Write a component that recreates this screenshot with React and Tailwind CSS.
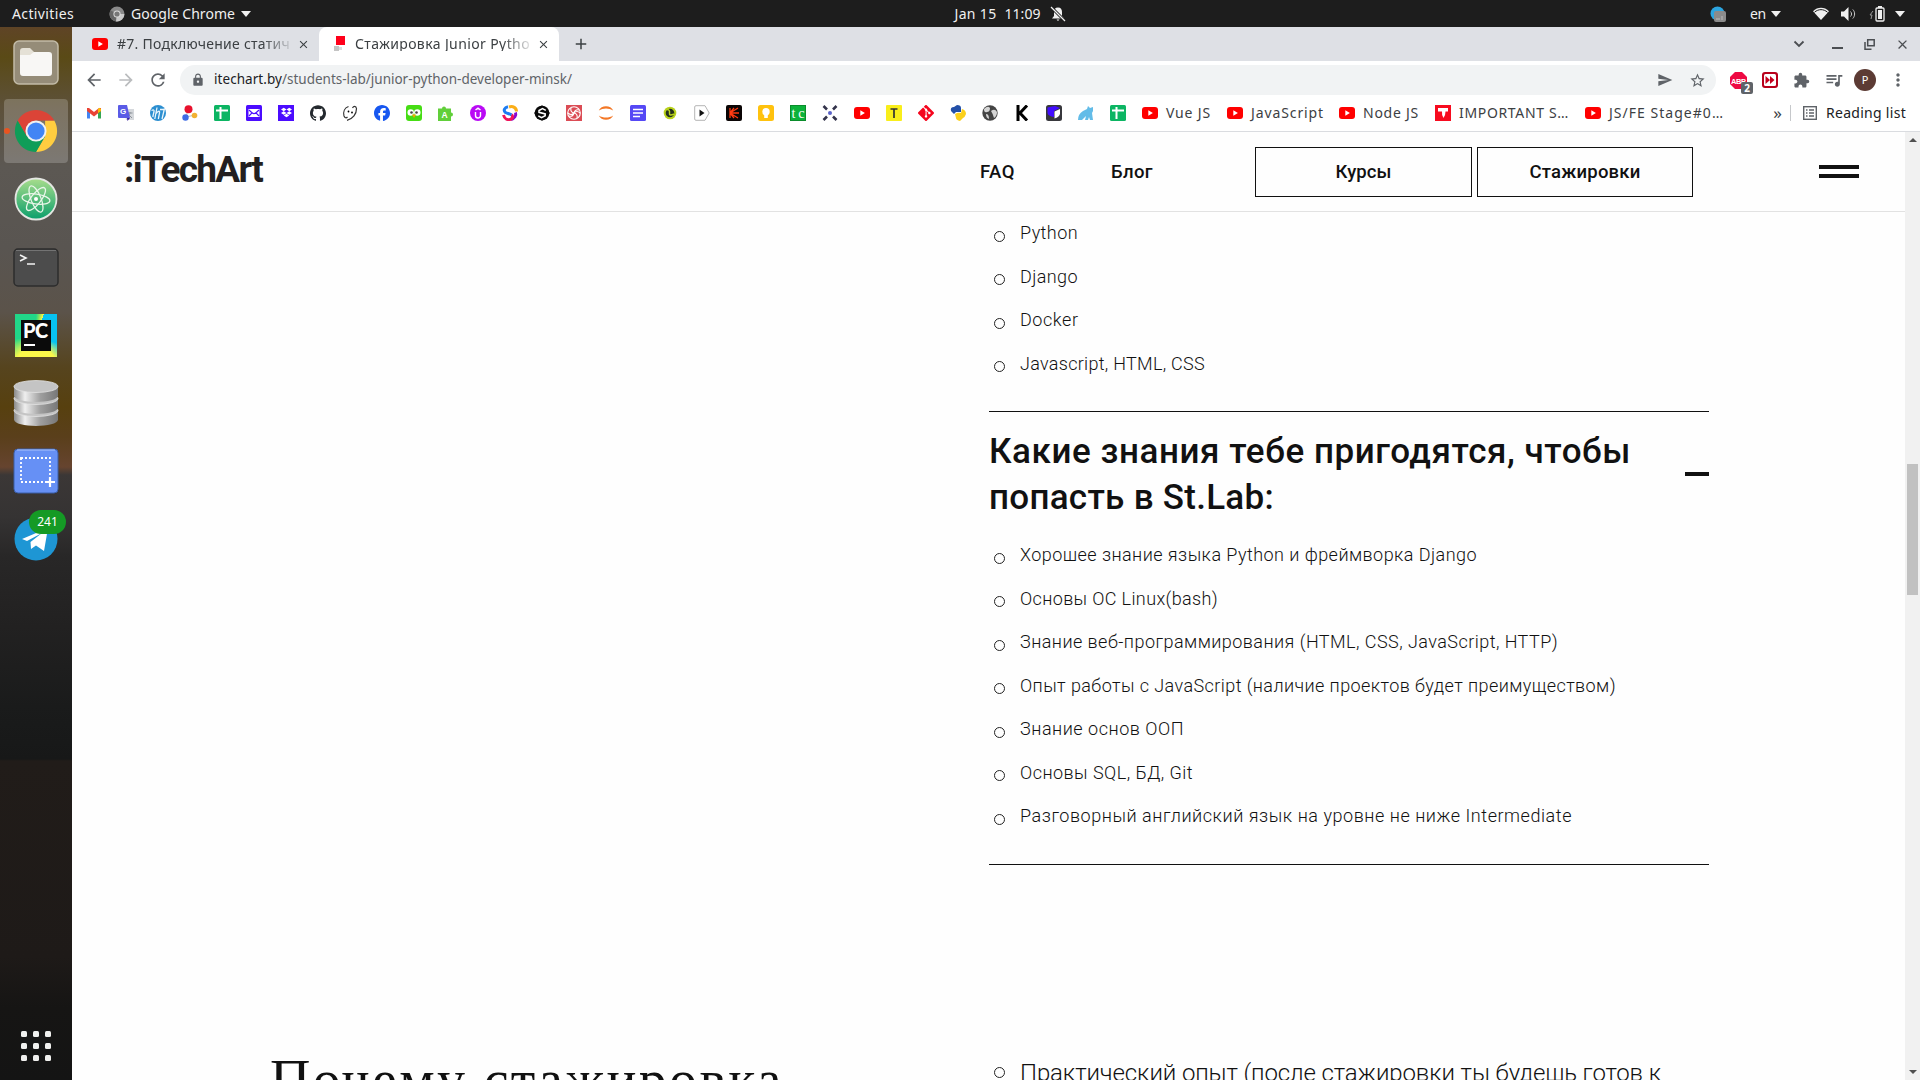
import React, { useLayoutEffect, useRef, useState } from "react";
import { SiDropbox, SiGithub, SiGit, SiFacebook } from "react-icons/si";
import {
  MdArrowBack, MdArrowForward, MdRefresh, MdLock, MdSend, MdStarBorder, MdExtension,
  MdMoreVert, MdClose, MdAdd, MdQueueMusic,
} from "react-icons/md";

const UI = "font-['Noto_Sans','Open_Sans',sans-serif]";

/* One line of text tracked so that it fills exactly w pixels. */
function Line({ w, className = "", children }) {
  const ref = useRef(null);
  const [gap, setGap] = useState(0);
  useLayoutEffect(() => {
    const natural = ref.current.getBoundingClientRect().width;
    setGap((w - natural) / String(children).length);
  }, [w, children]);
  return (
    <span className={"block shrink-0 whitespace-nowrap " + className} style={{ width: w }}>
      <span ref={ref} style={{ letterSpacing: gap }}>{children}</span>
    </span>
  );
}

function YouTube() {
  return (
    <svg viewBox="0 0 16 16" className="size-4 shrink-0">
      <rect y="2" width="16" height="12" rx="3" fill="#f00" />
      <path d="M6.3 5.3v5.4L10.9 8z" fill="#fff" />
    </svg>
  );
}

function TopBar() {
  return (
    <div className={`grid h-[27px] grid-cols-[1fr_auto_1fr] items-center bg-[#1d1d1d] text-[14px] leading-none text-[#f0f0f0] ${UI}`}>
      <div className="flex items-center pl-3">
        <Line w={62}>Activities</Line>
        <svg viewBox="0 0 16 16" className="ml-[35px] size-[16px]">
          <circle cx="8" cy="8" r="7.5" fill="#8a8a8a" />
          <path d="M8 8 1.5 4.2A7.5 7.5 0 0 0 7 15.4z" fill="#666" />
          <path d="M8 8h7.4A7.5 7.5 0 0 1 7 15.4z" fill="#c9c9c9" />
          <circle cx="8" cy="8" r="3.6" fill="#ddd" />
          <circle cx="8" cy="8" r="2.6" fill="#777" />
        </svg>
        <Line w={104} className="ml-[6px]">Google Chrome</Line>
        <svg viewBox="0 0 10 6" className="ml-[6px] h-[6px] w-[10px]"><path d="M0 0h10L5 6z" fill="#f0f0f0" /></svg>
      </div>
      <div className="flex items-center pl-[100px]">
        <Line w={42}>Jan 15</Line>
        <Line w={36} className="ml-[8px]">11:09</Line>
        <svg viewBox="0 0 16 16" className="ml-[9px] size-[16px]">
          <path d="M8 1.5c2.8 0 4 2 4 4.500v4L14 12.500H2L4 10V6c0-2.500 1.200-4.500 4-4.500zM6.500 13.500h3L8 15z" fill="#f0f0f0" />
          <path d="M1 1 15 15" stroke="#1d1d1d" strokeWidth="3" />
          <path d="M1 1 15 15" stroke="#f0f0f0" strokeWidth="1.300" />
        </svg>
      </div>
      <div className="flex items-center justify-end pr-[15px]">
        <svg viewBox="0 0 16 16" className="size-[16px]">
          <circle cx="7.500" cy="7.500" r="7" fill="#2ca5e0" />
          <rect x="4" y="5" width="12" height="11" rx="2" fill="#8b8b8b" />
          <path d="M6 13h4M12 10v4" stroke="#bbb" />
        </svg>
        <Line w={16} className="ml-[24px]">en</Line>
        <svg viewBox="0 0 10 6" className="ml-[5px] h-[6px] w-[10px]"><path d="M0 0h10L5 6z" fill="#f0f0f0" /></svg>
        <svg viewBox="0 0 16 13" className="ml-[32px] h-[13px] w-[16px]">
          <path d="M0 4.200C4.500-.4 11.500-.4 16 4.200L8 13z" fill="#f0f0f0" />
          <path d="M1.500 5.200C5.500 1.800 10.500 1.800 14.500 5.200" stroke="#1d1d1d" fill="none" />
        </svg>
        <svg viewBox="0 0 16 14" className="ml-[12px] h-[14px] w-[16px]">
          <path d="M0 4.500h3L7.500 0v14L3 9.500H0z" fill="#f0f0f0" />
          <path d="M9.500 4.500c1.400 1.400 1.400 3.600 0 5M11.800 2.500c2.400 2.400 2.400 6.600 0 9" stroke="#ccc" fill="none" />
        </svg>
        <svg viewBox="0 0 16 16" className="ml-[12px] size-[16px]">
          <path d="M4 5 1 9h2l-1 4" stroke="#999" fill="none" />
          <rect x="7" y="2" width="8" height="13" rx="1" fill="none" stroke="#f0f0f0" strokeWidth="1.300" />
          <path d="M9 0h4v2H9zM9 4h4v9H9z" fill="#f0f0f0" />
        </svg>
        <svg viewBox="0 0 10 6" className="ml-[10px] h-[6px] w-[10px]"><path d="M0 0h10L5 6z" fill="#f0f0f0" /></svg>
      </div>
    </div>
  );
}

function Dock() {
  return (
    <aside className="flex w-[72px] shrink-0 flex-col items-center bg-[linear-gradient(180deg,#5f4426_0px,#5a4a16_30px,#5d513a_80px,#5c5853_140px,#595551_220px,#5b534a_285px,#56441e_340px,#57400f_380px,#5a3f1b_410px,#66442f_440px,#3b3736_448px,#353333_490px,#282727_530px,#222121_600px,#1a1b1b_680px,#171818_732px,#211c19_734px,#1e1a18_930px,#161514_980px,#141414_1053px)] pt-[13px]">
      <svg viewBox="0 0 46 46" className="size-[46px]">
        <rect x="1" y="1" width="44" height="43" rx="5" fill="#958c78" stroke="#c2bba7" strokeWidth="1.500" />
        <path d="M7 11q0-3 3-3h7l4 4h15v6H7z" fill="#e5e1d6" />
        <path d="M7 15h10l4-3h15q3 0 3 3v18q0 3-3 3H10q-3 0-3-3z" fill="#f8f7f5" />
      </svg>
      <div className="mt-[13px] flex h-[64px] w-full items-center">
        <span className="ml-1 flex h-[64px] w-[64px] items-center rounded-[4px] bg-white/20">
          <i className="block size-[6px] rounded-full bg-[#e95420]" />
          <svg viewBox="0 0 48 48" className="ml-[3px] size-[46px]">
            <path d="M43.050 13A22 22 0 0 1 24 46L33.500 29.500 33.500 13z" fill="#ffcd40" />
            <path d="M4.950 13A22 22 0 0 0 24 46L33.500 29.500 14.500 29.500z" fill="#0f9d58" />
            <path d="M24 24 24 13H43.050A22 22 0 0 0 4.950 13L14.500 29.500z" fill="#db4437" />
            <circle cx="24" cy="24" r="11" fill="#f1f1f1" />
            <circle cx="24" cy="24" r="9" fill="#4285f4" />
          </svg>
        </span>
      </div>
      <svg viewBox="0 0 44 44" className="mt-[14px] size-[44px]">
        <defs><linearGradient id="atom" x2="0" y2="1"><stop stopColor="#a8dd8c" /><stop offset="1" stopColor="#0b9f6b" /></linearGradient></defs>
        <circle cx="22" cy="22" r="20.500" fill="url(#atom)" stroke="#e4e6e2" strokeWidth="1.800" />
        <g fill="none" stroke="#eaf6ea" strokeWidth="1.300">
          <ellipse cx="22" cy="22" rx="14" ry="5" transform="rotate(8 22 22)" />
          <ellipse cx="22" cy="22" rx="14" ry="5" transform="rotate(68 22 22)" />
          <ellipse cx="22" cy="22" rx="14" ry="5" transform="rotate(128 22 22)" />
        </g>
        <circle cx="22" cy="22" r="2" fill="#fff" />
      </svg>
      <svg viewBox="0 0 46 39" className="mt-[27px] h-[39px] w-[46px]">
        <rect x="1" y="1" width="44" height="37" rx="4" fill="#4c4c4c" stroke="#2c2c2c" strokeWidth="1.500" />
        <path d="M3 2.500h40" stroke="#737373" />
        <path d="M7 7l6 3-6 3M14 16h8" stroke="#f2f2f2" strokeWidth="1.600" fill="none" />
      </svg>
      <div className="mt-[27px] flex h-[43px] w-[42px] items-center justify-center bg-[conic-gradient(from_20deg,#07c3f2_0deg,#07c3f2_90deg,#fcf84a_120deg,#fcf84a_200deg,#21d789_240deg,#21d789_340deg,#8ee35b_350deg,#fcf84a_360deg)]">
        <span className="flex h-[31px] w-[30px] flex-col bg-[#0b0b0b] pl-[2px] pt-[2px]">
          <b className="font-['Lato',sans-serif] text-[20px] font-black leading-[17px] tracking-[-0.5px] text-white">PC</b>
          <i className="ml-[1px] mt-[5px] block h-[2px] w-[11px] bg-white" />
        </span>
      </div>
      <svg viewBox="0 0 46 48" className="mt-[22px] h-[49px] w-[46px]">
        <defs><linearGradient id="db"><stop stopColor="#8a8a8a" /><stop offset=".25" stopColor="#efefef" /><stop offset=".6" stopColor="#9f9f9f" /><stop offset="1" stopColor="#777" /></linearGradient></defs>
        {[30, 18, 6].map((y) => (
          <g key={y}>
            <path d={`M1 ${y + 1}v9c0 8.500 44 8.500 44 0v-9z`} fill="url(#db)" />
            <ellipse cx="23" cy={y + 1} rx="22" ry="6" fill="#c4c4c4" stroke="#e3e3e3" strokeWidth=".8" />
          </g>
        ))}
      </svg>
      <svg viewBox="0 0 46 46" className="mt-[20px] size-[46px]">
        <rect x="1" y="1" width="44" height="44" rx="4" fill="#6690f5" stroke="#3b5ea8" />
        <path d="M4 2h38" stroke="#a9c2fb" />
        <rect x="8" y="10" width="29" height="24" fill="none" stroke="#fff" strokeWidth="1.800" strokeDasharray="2 2" />
        <path d="M37 29v10M32 34h10" stroke="#fff" strokeWidth="2.200" />
      </svg>
      <div className="relative mt-[23px] size-[44px]">
        <svg viewBox="0 0 44 44" className="size-[44px]">
          <circle cx="22" cy="22" r="21.500" fill="#1e96d4" />
          <path d="M8 22 34 11 30 34 22 28.500 17 32 16.500 25 28 16 13 24z" fill="#fff" />
        </svg>
        <span className={`absolute -top-[7px] left-[15px] flex h-[24px] w-[37px] items-center justify-center rounded-full bg-[#159a25] text-[12px] text-white ${UI}`}>241</span>
      </div>
      <div className="mb-[19px] mt-auto grid grid-cols-3 gap-[6px]">
        {Array.from({ length: 9 }, (_, i) => <i key={i} className="block size-[6px] rounded-[1.500px] bg-[#f0f0ee]" />)}
      </div>
    </aside>
  );
}

function Tabs() {
  return (
    <div className={`flex h-[34px] items-center bg-[#dee0e5] text-[14px] leading-none text-[#3c4043] ${UI}`}>
      <div className="flex w-[247px] items-center pl-[20px]">
        <YouTube />
        <Line w={173} className="ml-[9px] [mask-image:linear-gradient(90deg,#000_84%,rgba(0,0,0,.15))]">#7. Подключение статич</Line>
        <MdClose className="ml-[7px] size-[13px]" />
      </div>
      <div className="flex h-[34px] w-[240px] items-center rounded-t-[8px] bg-white pl-[15px]">
        <svg viewBox="0 0 12 16" className="h-4 w-3 shrink-0">
          <path d="M2 0h9v9H2z" fill="#ff001a" /><path d="M0 10h5v5H0z" fill="#c4c4c4" /><path d="M5 11h3v3H5z" fill="#ddd" />
        </svg>
        <Line w={175} className="ml-[9px] [mask-image:linear-gradient(90deg,#000_84%,rgba(0,0,0,.15))]">Стажировка Junior Pytho</Line>
        <MdClose className="ml-[7px] size-[13px]" />
      </div>
      <MdAdd className="ml-[13px] size-[18px]" />
      <div className="ml-auto flex items-center pr-[10px] text-[#4b4e52]">
        <svg viewBox="0 0 12 8" className="h-[8px] w-[12px]"><path d="M1.500 1.500 6 6l4.500-4.500" fill="none" stroke="currentColor" strokeWidth="1.800" /></svg>
        <i className="ml-[27px] mt-[8px] block h-[2px] w-[11px] bg-current" />
        <svg viewBox="0 0 11 11" className="ml-[21px] size-[11px]"><path d="M3.700.8h6.500v6H3.700zM1 3v7.200h6.500" fill="none" stroke="currentColor" strokeWidth="1.500" /></svg>
        <MdClose className="ml-[20px] size-[15px]" />
      </div>
    </div>
  );
}

function Toolbar() {
  return (
    <div className={`flex h-[38px] items-center bg-white text-[#5f6368] ${UI}`}>
      <MdArrowBack className="ml-[12px] size-[20px]" />
      <MdArrowForward className="ml-[12px] size-[20px] text-[#babcbe]" />
      <MdRefresh className="ml-[12px] size-[20px]" />
      <div className="ml-[12px] flex h-[30px] w-[1536px] items-center rounded-full bg-[#f1f3f4] text-[13.500px] leading-none">
        <MdLock className="ml-[11px] size-[14px]" />
        <Line w={68} className="ml-[9px] text-[#202124]">itechart.by</Line>
        <Line w={290}>/students-lab/junior-python-developer-minsk/</Line>
        <MdSend className="ml-auto size-[16px]" />
        <MdStarBorder className="ml-[16px] mr-[10px] size-[17px]" />
      </div>
      <div className="relative ml-[14px] size-[17px]">
        <svg viewBox="0 0 17 17" className="size-[17px]">
          <path d="M5 0h7l5 5v7l-5 5H5l-5-5V5z" fill="#ee0a43" />
          <text x="1" y="11.500" fontSize="7.500" fontWeight="700" fill="#fff" fontFamily="Liberation Sans" textLength="15">ABP</text>
        </svg>
        <span className="absolute left-[11px] top-[10px] flex h-[12px] w-[12px] items-center justify-center rounded-[2px] bg-[#5f6368] text-[10px] font-bold leading-none text-white">2</span>
      </div>
      <svg viewBox="0 0 16 16" className="ml-[15px] size-4">
        <rect width="16" height="16" rx="3" fill="#b8001b" /><rect x="2" y="2" width="12" height="12" rx="1.500" fill="#fff" />
        <path d="M3.500 4 8 8l-4.500 4zM8 4l4.500 4L8 12z" fill="#c4001d" />
      </svg>
      <MdExtension className="ml-[15px] size-[17px]" />
      <MdQueueMusic className="ml-[14px] size-[20px]" />
      <span className="ml-[10px] flex size-[22px] items-center justify-center rounded-full bg-[#5c3b34] text-[11px] text-white">P</span>
      <MdMoreVert className="ml-[12px] size-[20px]" />
    </div>
  );
}

const S = ({ children }) => <svg viewBox="0 0 16 16" className="size-4 shrink-0">{children}</svg>;
const Sheet = () => <S><rect width="16" height="16" rx="1.500" fill="#0cb563" /><path d="M6.500 2v12M2 5.500h12" stroke="#fff" strokeWidth="2" /></S>;

function Bookmarks() {
  return (
    <div className={`flex h-[33px] items-center border-b border-[#dadce0] bg-white pb-[5px] pl-[14px] text-[14px] leading-none text-[#3c4043] ${UI}`}>
      <div className="flex gap-4">
        <S><path d="M1 4v9.500h3V6.500z" fill="#4285f4" /><path d="M15 4v9.500h-3V6.500z" fill="#34a853" /><path d="M1 3h2l5 4 5-4h2v3L8 11.500 1 6z" fill="#ea4335" /><path d="M12 4l1.500-1.200L15 4v2l-3 2z" fill="#fbbc04" /></S>
        <S><path d="M6 4h10v11H8z" fill="#d5d8dc" /><path d="M8.500 8h6M12 7c0 2-1 4-3 5M10 9l4 4" stroke="#8c9299" fill="none" /><path d="M1 0h8l3 13H1q-1 0-1-1V1q0-1 1-1z" fill="#5a5be6" /><path d="M9 13h3l-2.500 3z" fill="#3b20a0" /><text x="2" y="9" fontSize="8" fontWeight="700" fill="#fff" fontFamily="Liberation Sans">G</text></S>
        <S><circle cx="8" cy="8" r="8" fill="#2b8ed0" /><path d="M1.500 5.500q3-1.500 2.500 1L2.800 12M7 2.500 4.800 14M6 8.500q4-4.500 3.500-.5L8.300 14M14.500 3.500 12 14M10 4.500h4" stroke="#e9f5fc" strokeWidth="1.300" fill="none" /></S>
        <S><path d="M6 5 4 12l9-2" stroke="#bbb" fill="none" /><circle cx="6.500" cy="4.200" r="4" fill="#e8112d" /><circle cx="3.500" cy="12.500" r="3.200" fill="#3d6be5" /><circle cx="12.500" cy="10.500" r="2.800" fill="#f2b233" /></S>
        <Sheet />
        <S><rect width="16" height="16" rx="1.500" fill="#4b0cff" /><rect x="2.500" y="4" width="11" height="8" fill="#fff" /><path d="M3 5l3 2.800L3 11M13 5l-3 2.800L13 11M6 7.800q2 1.500 4 0" stroke="#4b0cff" fill="none" strokeWidth="1.200" /></S>
        <span className="flex size-4 items-center justify-center bg-[#4b0cff] text-white"><SiDropbox className="size-[11px]" /></span>
        <SiGithub className="size-4 text-[#24292e]" />
        <S><path d="M6.500 1.500C2.500 3 1 7 2 11q1.500 3 3.500 1M5 15.300C11 14 14.500 9 14.500 3.500 14 .5 11.500 1 10.500 3" stroke="#333" strokeWidth="1.200" fill="none" /><circle cx="6.500" cy="6.500" r=".9" /><circle cx="10" cy="7.500" r=".9" /></S>
        <SiFacebook className="size-4 text-[#1757f0]" />
        <S><rect width="16" height="16" rx="3" fill="#46dd14" /><circle cx="4.700" cy="7.500" r="3.200" fill="#fff" /><circle cx="11.300" cy="7.500" r="3.200" fill="#fff" /><circle cx="5.500" cy="7.500" r="1.300" fill="#444" /><circle cx="10.500" cy="7.500" r="1.300" fill="#444" /><path d="M6 9.500h4L8 13z" fill="#f7a300" /></S>
        <S><path d="M0 3.500h4a2 2 0 1 1 4 0h5v4a2 2 0 1 1 0 4V16H0z" fill="#61cf3a" /><text x="3.500" y="13" fontSize="8.500" fontWeight="700" fill="#fff" fontFamily="Liberation Sans">A</text></S>
        <S><circle cx="8" cy="8" r="8" fill="#b90af5" /><path d="M5.500 7v3.500a2.500 2.500 0 0 0 5 0V7M5.500 5 8 3.200 10.500 5" stroke="#fff" strokeWidth="1.400" fill="none" /></S>
        <S><g fill="none" strokeWidth="3"><path d="M7 2c4-1.500 7.500 1 7.500 4.500" stroke="#fbae17" /><path d="M13.500 7.500c1 3-1 6-4.500 7" stroke="#8a08cf" /><path d="M1.500 10c1 4 4 5 6.500 4.500 2.500-.5 3.500-3 1.500-5" stroke="#f0145a" /><path d="M6 1.800C2.500 2.500 1 5.500 3.500 7.500 5 8.500 7 8.500 9.500 9.800" stroke="#1c7cf2" /></g></S>
        <S><rect x="2" y="2" width="12" height="12" rx="2.500" transform="rotate(45 8 8)" fill="#080808" /><circle cx="8" cy="8" r="7.300" fill="#080808" /><path d="M11.800 5.300 8.500 3.600 5 5.500v1.800l6.200 1.600v1.800L7.500 12.600 4.300 10.900" stroke="#fff" strokeWidth="1.500" fill="none" /></S>
        <S><rect width="16" height="16" fill="#db4c55" /><g fill="none" stroke="#fff" strokeWidth="1.100"><circle cx="8" cy="8" r="6.300" /><path d="M8 8q-4-1-3-5M8 8q1-4 5-3M8 8q4 1 3 5M8 8q-1 4-5 3M8 8q-3 3-6 0M8 8q3-3 6 0" /></g></S>
        <S><path d="M.8 5.500C3-.2 13-.2 15.200 5.500 11 2.800 5 2.800.8 5.500zM.8 10.500c2.200 5.700 12.200 5.700 14.400 0-4.200 2.700-10.200 2.700-14.400 0z" fill="#f37726" /></S>
        <S><rect width="16" height="16" rx="1.500" fill="#5548f5" /><path d="M3 4.500h10M3 8h10M3 11.500h7" stroke="#fff" strokeWidth="1.600" /></S>
        <S><circle cx="8" cy="8" r="6.300" fill="#b9d21c" /><circle cx="8" cy="8" r="4.300" fill="#24301c" /><path d="M5 4.500q3 0 2.500 3.500T12 9" stroke="#b9d21c" strokeWidth="1.500" fill="none" /></S>
        <S><path d="M2 .7h9l4.200 7.300-4.200 7.300H2q-1.300 0-1.300-1.300V2Q.7.7 2 .7z" fill="#fff" stroke="#b5b5b5" /><path d="M5.500 4.500v7l5-3.500z" fill="#111" /></S>
        <S><rect width="16" height="16" rx="2" fill="#0a0505" /><path d="M4 3v10M4 8l8-5M4 8h9M4 8l8 5M4 8l4-5M4 8l4 5" stroke="#ff3b12" strokeWidth="1.300" /></S>
        <S><rect width="16" height="16" rx="2.500" fill="#ffc20e" /><circle cx="8" cy="6.800" r="3.700" fill="#fff" /><path d="M6.200 10h3.600v3H6.200z" fill="#fff" /></S>
        <S><rect width="16" height="16" fill="#0a8c2b" /><rect x="1" y="1" width="14" height="14" fill="#0cb23a" /><text x="1.500" y="12.500" fontSize="14" fill="#fff" fontFamily="Liberation Serif" textLength="13">tc</text></S>
        <S><path d="M1.500 1 5 4.500M14.500 1 11 4.500M1.500 15 5 11.500M14.500 15 11 11.500" stroke="#33334b" strokeWidth="2.600" /><circle cx="8" cy="8" r="2" fill="#5a62c8" /></S>
        <YouTube />
        <S><rect width="16" height="16" rx="1" fill="#f9ee1b" /><path d="M4.500 4h7M8 4v9" stroke="#333" strokeWidth="1.700" /></S>
        <SiGit className="size-4 text-[#f5051d]" />
        <S><path d="M1 6q-1-4 3-4l3-2q4 0 4 3v4H6L4 9z" fill="#2350a8" /><path d="M5 9q3-2 6-1l1-4q4 1 4 5-1 3-3 4l-3 3q-4-1-4-3z" fill="#fbd01c" /></S>
        <S><circle cx="8" cy="8" r="7.700" fill="#444" /><path d="M2 4q4-4 6-1 0 4-3 4-3 1-3-3zM9 6q4-3 6 1 0 4-3 6-1-4-3-7zM4 9q3 0 3 5-3-1-3-5z" fill="#d5d5d5" /></S>
        <S><path d="M4 0v16M13 .5 6 8l7 7.500" stroke="#000" strokeWidth="3" fill="none" /></S>
        <S><rect width="16" height="16" rx="2.500" fill="#38383d" /><path d="M1.500 2.500 9 1l5 2-6 3v6Q2 11 1.500 8z" fill="#420cff" /><path d="M8.500 6.500 14 4v5q-1 3-5.500 4.500z" fill="#fff" /></S>
        <S><path d="M0 15q0-6 5-9l4-2 1-3 2 2 3-1v4l-1 2 1 7h-3l-1-3-1 3H7l1-4-4 4z" fill="#63bce8" /></S>
        <Sheet />
      </div>
      <div className="ml-4 flex items-center"><YouTube /><Line w={45} className="ml-2">Vue JS</Line></div>
      <div className="ml-4 flex items-center"><YouTube /><Line w={73} className="ml-2">JavaScript</Line></div>
      <div className="ml-[15px] flex items-center"><YouTube /><Line w={56} className="ml-2">Node JS</Line></div>
      <div className="ml-4 flex items-center">
        <S><rect width="16" height="16" fill="#f70b1f" /><path d="M3 3h10v3.500h-2.500q0 4-2 6.500Q6.500 10 7 6.500H3z" fill="#fff" /></S>
        <Line w={110} className="ml-2">IMPORTANT S…</Line>
      </div>
      <div className="ml-4 flex items-center"><YouTube /><Line w={115} className="ml-2">JS/FE Stage#0…</Line></div>
      <span className="ml-auto text-[17px]">»</span>
      <i className="ml-[8px] block h-[16px] w-px bg-[#c6c8cb]" />
      <svg viewBox="0 0 14 14" className="ml-[12px] size-[14px]"><rect x=".7" y=".7" width="12.600" height="12.600" fill="none" stroke="#5f6368" strokeWidth="1.400" /><path d="M3 4h1.500M3 7h1.500M3 10h1.500M6 4h5M6 7h5M6 10h5" stroke="#5f6368" strokeWidth="1.300" /></svg>
      <Line w={80} className="ml-[9px] mr-[14px] text-[#202124]">Reading list</Line>
    </div>
  );
}

function Header() {
  return (
    <header className="flex h-[80px] shrink-0 items-center border-b border-[#e2e2e2] font-['Roboto',sans-serif] text-[18.500px] font-medium leading-none text-[#111]">
      <Line w={138} className="mb-[3px] ml-[52px] text-[37px] font-bold leading-[40px] text-[#231f20]">:iTechArt</Line>
      <Line w={35} className="ml-[718px] mt-[2px]">FAQ</Line>
      <Line w={42} className="ml-[96px] mt-[2px]">Блог</Line>
      <div className="ml-[102px] flex gap-[5px]">
        <div className="flex h-[50px] w-[217px] items-center justify-center border border-[#111] pt-[2px]"><Line w={56}>Курсы</Line></div>
        <div className="flex h-[50px] w-[216px] items-center justify-center border border-[#111] pt-[2px]"><Line w={111}>Стажировки</Line></div>
      </div>
      <div className="ml-[126px] flex flex-col gap-[5px]">
        <i className="block h-[4px] w-[40px] bg-[#111]" />
        <i className="block h-[4px] w-[40px] bg-[#111]" />
      </div>
    </header>
  );
}

function Item({ w, children }) {
  return (
    <li className="flex h-[43.500px] items-center text-[18px] font-light leading-none">
      <i className="ml-[5px] mt-[5px] block size-[11px] rounded-full border border-[#222]" />
      <Line w={w} className="mb-px ml-[15px]">{children}</Line>
    </li>
  );
}

const stack = [["Python", 58], ["Django", 58], ["Docker", 58.5], ["Javascript, HTML, CSS", 185]];
const skills = [
  ["Хорошее знание языка Python и фреймворка Django", 457],
  ["Основы ОС Linux(bash)", 198],
  ["Знание веб-программирования (HTML, CSS, JavaScript, HTTP)", 538],
  ["Опыт работы с JavaScript (наличие проектов будет преимуществом)", 596],
  ["Знание основ ООП", 164],
  ["Основы SQL, БД, Git", 173],
  ["Разговорный английский язык на уровне не ниже Intermediate", 552],
];

function Page() {
  return (
    <div className="flex min-h-0 flex-1 bg-[#fefefe]">
      <div className="flex min-w-0 flex-1 flex-col overflow-hidden">
        <Header />
        <main className="ml-[917px] w-[720px] shrink-0 font-['Roboto',sans-serif] text-[#111]">
          <ul>{stack.map(([t, w]) => <Item key={t} w={w}>{t}</Item>)}</ul>
          <div className="mt-[25px] flex h-[115px] items-center justify-between border-t border-[#111]">
            <h2 className="mt-[12px] text-[35px] font-medium leading-[46px]">
              <Line w={642}>Какие знания тебе пригодятся, чтобы</Line>
              <Line w={285}>попасть в St.Lab:</Line>
            </h2>
            <i className="mt-[10px] block h-[4px] w-[24px] bg-[#111]" />
          </div>
          <ul className="mt-[8px]">{skills.map(([t, w]) => <Item key={t} w={w}>{t}</Item>)}</ul>
          <div className="mt-[25px] h-px bg-[#111]" />
        </main>
        <section className="mt-[178px] flex shrink-0 text-[#111]">
          <h2 className="ml-[198px] mt-[2px] w-[719px] font-['Liberation_Serif',serif] text-[56px] leading-[70px]">
            <Line w={514}>Почему стажировка</Line>
          </h2>
          <div className="flex h-[60px] items-center font-['Roboto',sans-serif] text-[24px] font-light">
            <i className="ml-[5px] block size-[11px] rounded-full border border-[#222]" />
            <Line w={641} className="ml-[15px]">Практический опыт (после стажировки ты будешь готов к</Line>
          </div>
        </section>
      </div>
      <div className="flex w-[15px] shrink-0 flex-col items-center bg-[#f1f1f1]">
        <svg viewBox="0 0 8 4" className="mt-[6px] h-[4px] w-[8px]"><path d="M0 4h8L4 0z" fill="#505050" /></svg>
        <i className="mt-[322px] block h-[131px] w-[11px] bg-[#c1c1c1]" />
        <svg viewBox="0 0 8 4" className="mb-[6px] mt-auto h-[4px] w-[8px]"><path d="M0 0h8L4 4z" fill="#505050" /></svg>
      </div>
    </div>
  );
}

export default function App() {
  return (
    <div className="flex h-[1080px] w-[1920px] flex-col overflow-hidden bg-white">
      <TopBar />
      <div className="flex min-h-0 flex-1">
        <Dock />
        <div className="flex min-w-0 flex-1 flex-col">
          <Tabs />
          <Toolbar />
          <Bookmarks />
          <Page />
        </div>
      </div>
    </div>
  );
}
